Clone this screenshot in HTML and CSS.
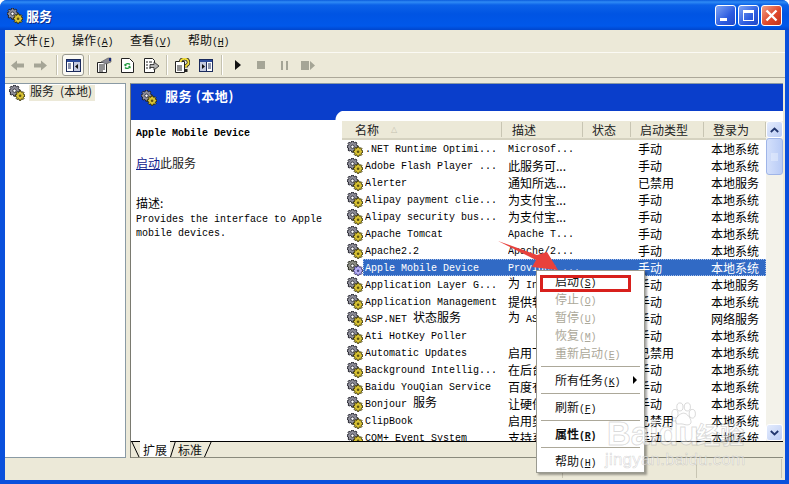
FILE: index.html
```html
<!DOCTYPE html>
<html lang="zh">
<head>
<meta charset="utf-8">
<title>服务</title>
<link rel="stylesheet" href="styles.css">
</head>
<body>
<svg class="defs" width="0" height="0">
  <defs>
    <symbol id="gears" viewBox="0 0 16 16">
      <path d="M4.700 0h1.600l.3 1.300 1.200.5 1.100-.7 1.100 1.100-.7 1.100.5 1.200 1.300.3v1.600l-1.300.3-.5 1.200.7 1.100-1.100 1.100-1.100-.7-1.200.5-.3 1.300H4.700l-.3-1.300-1.200-.5-1.100.7L1 9.100l.7-1.100-.5-1.200L0 6.500V4.900l1.300-.3.500-1.200L1 2.300l1.100-1.100 1.100.7 1.200-.5z" fill="#8e8e9a" stroke="#1c1c26" stroke-width=".9"/>
      <circle cx="5.500" cy="5.700" r="1.700" fill="#fff" stroke="#1c1c26" stroke-width=".8"/>
      <path d="M10.400 5.800h1.400l.3 1.100 1 .4 1-.6.9 1-.6.9.4 1 1.100.3v1.400l-1.100.3-.4 1 .6 1-.9.9-1-.6-1 .4-.3 1.100h-1.400l-.3-1.100-1-.4-1 .6-.9-.9.6-1-.4-1-1.100-.3v-1.400l1.100-.3.4-1-.6-.9.9-1 1 .6 1-.4z" fill="#d8c234" stroke="#262200" stroke-width=".9"/>
      <circle cx="11.100" cy="10.800" r="1.300" fill="#5e5410"/>
    </symbol>
  </defs>
</svg>
<div class="window">
  <header class="titlebar">
    <svg class="ico16"><use href="#gears"/></svg>
    <span class="title">服务</span>
    <div class="winbtns">
      <span class="wb wb-min"><svg width="21" height="21" viewBox="0 0 21 21"><rect x="5" y="13" width="7" height="3" fill="#fff"/></svg></span>
      <span class="wb wb-max"><svg width="21" height="21" viewBox="0 0 21 21"><path d="M5 5h11v11H5zM6 8v7h9V8z" fill="#fff" fill-rule="evenodd"/></svg></span>
      <span class="wb wb-close"><svg width="21" height="21" viewBox="0 0 21 21"><path d="M5.500 5.500l10 10M15.500 5.500l-10 10" stroke="#fff" stroke-width="2.400"/></svg></span>
    </div>
  </header>

  <nav class="menubar">
    <span class="menu"><span class="cn">文件</span>(<u>F</u>)</span>
    <span class="menu"><span class="cn">操作</span>(<u>A</u>)</span>
    <span class="menu"><span class="cn">查看</span>(<u>V</u>)</span>
    <span class="menu"><span class="cn">帮助</span>(<u>H</u>)</span>
  </nav>

  <div class="toolbar">
    <span class="tool t-back"><svg width="13" height="11" viewBox="0 0 13 11"><path d="M0 5.500L6 .5v3h7v4H6v3z" fill="#a5a596"/></svg></span>
    <span class="tool t-fwd"><svg width="13" height="11" viewBox="0 0 13 11"><path d="M13 5.500L7 .5v3H0v4h7v3z" fill="#a5a596"/></svg></span>
    <span class="tsep s1"></span>
    <span class="tool t-tree"><svg width="15" height="13" viewBox="0 0 15 13"><rect x=".5" y=".5" width="14" height="12" fill="#fff" stroke="#1a2a5c"/><rect x="1" y="1" width="13" height="2" fill="#2a4a9c"/><rect x="7" y="3" width="7" height="9" fill="#c5cbe0"/><path d="M7.500 3v9" stroke="#1a2a5c"/><path d="M2 5h3M2 7h3M2 9h3" stroke="#1a2a5c"/><path d="M12 5v5L9 7.500z" fill="#111"/></svg></span>
    <span class="tsep s2"></span>
    <span class="tool t-prop"><svg width="16" height="16" viewBox="0 0 16 16"><path d="M1.500 5.500h9l0 10h-9z" fill="#fff" stroke="#222"/><path d="M3 8h6M3 10h6M3 12h6M3 14h4" stroke="#222"/><path d="M5 5l7-4h3v4l-5 2z" fill="#8a8a92" stroke="#555" stroke-width=".6"/><rect x="13" y="1" width="2" height="3" fill="#1a2a7c"/></svg></span>
    <span class="tool t-ref"><svg width="13" height="15" viewBox="0 0 13 15"><path d="M.5.500h8l4 4v10H.5z" fill="#fff" stroke="#222"/><path d="M9 6.500a3 3 0 0 0-5 1M4 9.500a3 3 0 0 0 5-1" fill="none" stroke="#1c9a3c" stroke-width="1.300"/><path d="M3 6l1 2.500 2-1zM10 10.500l-1-3-2 1z" fill="#1c9a3c"/></svg></span>
    <span class="tool t-exp"><svg width="15" height="15" viewBox="0 0 15 15"><path d="M.5.500h8l2 2v12H.5z" fill="#fff" stroke="#222"/><path d="M2 4h2M5 4h3M2 7h2M2 10h2M5 10h2" stroke="#222"/><path d="M6 6.500h4v-2.500l5 4-5 4V9.500H6z" fill="#b5b5b5" stroke="#222" stroke-width=".8"/></svg></span>
    <span class="tsep s3"></span>
    <span class="tool t-help"><svg width="15" height="15" viewBox="0 0 15 15"><path d="M.5 3.500h9v11h-9z" fill="#fff" stroke="#222"/><path d="M2 8h5M2 10h5M2 12h5" stroke="#222"/><path d="M5.500 4a4 3.500 0 1 1 5.500 3.500v2" fill="none" stroke="#222" stroke-width="3.400"/><path d="M5.500 4a4 3.500 0 1 1 5.500 3.500v2" fill="none" stroke="#f0dc3a" stroke-width="1.800"/><rect x="9.500" y="11" width="3" height="3" fill="#222"/></svg></span>
    <span class="tool t-pane"><svg width="14" height="13" viewBox="0 0 14 13"><rect x=".5" y=".5" width="13" height="12" fill="#fff" stroke="#1a2a5c"/><rect x="1" y="1" width="12" height="2" fill="#2a4a9c"/><rect x="1" y="3" width="6" height="9" fill="#c5cbe0"/><path d="M7.500 3v9" stroke="#1a2a5c"/><path d="M9 5h3M9 7h3M9 9h3" stroke="#1a2a5c"/><path d="M3 5v5l3-2.500z" fill="#111"/></svg></span>
    <span class="tsep s4"></span>
    <span class="tool t-play"><svg width="6" height="10" viewBox="0 0 6 10"><path d="M0 0l6 5-6 5z" fill="#111"/></svg></span>
    <span class="tool t-stop"><svg width="8" height="8" viewBox="0 0 8 8"><rect width="8" height="8" fill="#a5a596"/></svg></span>
    <span class="tool t-pause"><svg width="7" height="9" viewBox="0 0 7 9"><path d="M0 0h2v9H0zM5 0h2v9H5z" fill="#a5a596"/></svg></span>
    <span class="tool t-step"><svg width="14" height="9" viewBox="0 0 14 9"><path d="M0 0h8v9H0zM9 0l5 4.500L9 9z" fill="#a5a596"/></svg></span>
  </div>

  <main class="content">
    <aside class="treepane">
      <div class="treeitem">
        <svg class="ico16"><use href="#gears"/></svg>
        <span class="treelabel"><span class="cn">服务</span> <span class="cn">(本地)</span></span>
      </div>
    </aside>

    <section class="mainpane">
      <div class="bluehead">
        <svg class="ico16"><use href="#gears"/></svg>
        <span class="bluetitle">服务 (本地)</span>
      </div>
      <div class="body">
        <div class="detail">
          <h1 class="svcname">Apple Mobile Device</h1>
          <p class="action"><a class="startlink" href="#">启动</a>此服务</p>
          <p class="desc"><span class="cn">描述:</span><br>Provides the interface to Apple<br>mobile devices.</p>
        </div>
        <div class="listwrap">
          <div class="list">
            <div class="listhead">
              <span class="col c-name"><span class="cn">名称</span><i class="sort">△</i></span>
              <span class="col c-desc cn">描述</span>
              <span class="col c-stat cn">状态</span>
              <span class="col c-type cn">启动类型</span>
              <span class="col c-log cn">登录为</span>
            </div>
            <div class="rows">
              <div class="row"><svg class="ico16"><use href="#gears"/></svg><div class="cells"><span>.NET Runtime Optimi...</span><span>Microsof...</span><span class="cn">手动</span><span class="cn">本地系统</span></div></div>
              <div class="row"><svg class="ico16"><use href="#gears"/></svg><div class="cells"><span>Adobe Flash Player ...</span><span class="cn">此服务可...</span><span class="cn">手动</span><span class="cn">本地系统</span></div></div>
              <div class="row"><svg class="ico16"><use href="#gears"/></svg><div class="cells"><span>Alerter</span><span class="cn">通知所选...</span><span class="cn">已禁用</span><span class="cn">本地服务</span></div></div>
              <div class="row"><svg class="ico16"><use href="#gears"/></svg><div class="cells"><span>Alipay payment clie...</span><span class="cn">为支付宝...</span><span class="cn">手动</span><span class="cn">本地系统</span></div></div>
              <div class="row"><svg class="ico16"><use href="#gears"/></svg><div class="cells"><span>Alipay security bus...</span><span class="cn">为支付宝...</span><span class="cn">手动</span><span class="cn">本地系统</span></div></div>
              <div class="row"><svg class="ico16"><use href="#gears"/></svg><div class="cells"><span>Apache Tomcat</span><span>Apache T...</span><span class="cn">手动</span><span class="cn">本地系统</span></div></div>
              <div class="row"><svg class="ico16"><use href="#gears"/></svg><div class="cells"><span>Apache2.2</span><span>Apache/2...</span><span class="cn">手动</span><span class="cn">本地系统</span></div></div>
              <div class="row selected"><svg class="ico16 dim"><use href="#gears"/></svg><div class="cells"><span>Apple Mobile Device</span><span>Provides ...</span><span class="cn">手动</span><span class="cn">本地系统</span></div></div>
              <div class="row"><svg class="ico16"><use href="#gears"/></svg><div class="cells"><span>Application Layer G...</span><span><span class="cn">为</span> Inter...</span><span class="cn">手动</span><span class="cn">本地服务</span></div></div>
              <div class="row"><svg class="ico16"><use href="#gears"/></svg><div class="cells"><span>Application Management</span><span class="cn">提供软件...</span><span class="cn">手动</span><span class="cn">本地系统</span></div></div>
              <div class="row"><svg class="ico16"><use href="#gears"/></svg><div class="cells"><span>ASP.NET <span class="cn">状态服务</span></span><span><span class="cn">为</span> ASP.NET...</span><span class="cn">手动</span><span class="cn">网络服务</span></div></div>
              <div class="row"><svg class="ico16"><use href="#gears"/></svg><div class="cells"><span>Ati HotKey Poller</span><span></span><span class="cn">手动</span><span class="cn">本地系统</span></div></div>
              <div class="row"><svg class="ico16"><use href="#gears"/></svg><div class="cells"><span>Automatic Updates</span><span class="cn">启用下载...</span><span class="cn">已禁用</span><span class="cn">本地系统</span></div></div>
              <div class="row"><svg class="ico16"><use href="#gears"/></svg><div class="cells"><span>Background Intellig...</span><span class="cn">在后台传...</span><span class="cn">手动</span><span class="cn">本地系统</span></div></div>
              <div class="row"><svg class="ico16"><use href="#gears"/></svg><div class="cells"><span>Baidu YouQian Service</span><span class="cn">百度有钱...</span><span class="cn">手动</span><span class="cn">本地系统</span></div></div>
              <div class="row"><svg class="ico16"><use href="#gears"/></svg><div class="cells"><span>Bonjour <span class="cn">服务</span></span><span class="cn">让硬件设...</span><span class="cn">手动</span><span class="cn">本地系统</span></div></div>
              <div class="row"><svg class="ico16"><use href="#gears"/></svg><div class="cells"><span>ClipBook</span><span class="cn">启用剪贴...</span><span class="cn">已禁用</span><span class="cn">本地系统</span></div></div>
              <div class="row"><svg class="ico16"><use href="#gears"/></svg><div class="cells"><span>COM+ Event System</span><span class="cn">支持系统...</span><span class="cn">手动</span><span class="cn">本地系统</span></div></div>
            </div>
          </div>
          <div class="scrollbar">
            <span class="sbtn"><svg width="9" height="6" viewBox="0 0 9 6"><path d="M.8 5L4.500 1.500 8.200 5" fill="none" stroke="#22366e" stroke-width="1.800"/></svg></span>
            <span class="thumb"><svg width="7" height="8" viewBox="0 0 7 8"><path d="M0 1h7M0 3h7M0 5h7M0 7h7" stroke="#e8effd"/></svg></span>
            <span class="track"></span>
            <span class="sbtn"><svg width="9" height="6" viewBox="0 0 9 6"><path d="M.8 1L4.500 4.500 8.200 1" fill="none" stroke="#22366e" stroke-width="1.800"/></svg></span>
          </div>
        </div>
      </div>
      <div class="tabs">
        <svg class="slash" width="9" height="17" viewBox="0 0 9 17"><path d="M.5 0l7.500 16" stroke="#000"/></svg>
        <span class="tab active">扩展</span>
        <svg class="slash" width="6" height="17" viewBox="0 0 6 17"><path d="M5.500 0L.5 16" stroke="#000"/></svg>
        <span class="tab">标准</span>
        <svg class="slash" width="8" height="17" viewBox="0 0 8 17"><path d="M7.500 0L.5 16" stroke="#000"/></svg>
      </div>
    </section>
  </main>

  <footer class="statusbar">
    <span class="st st1"></span><span class="st st2"></span><span class="st st3"></span>
  </footer>
</div>

<ul class="ctxmenu">
  <li class="mi"><span class="cn">启动</span>(<u>S</u>)</li>
  <li class="mi off"><span class="cn">停止</span>(<u>O</u>)</li>
  <li class="mi off"><span class="cn">暂停</span>(<u>U</u>)</li>
  <li class="mi off"><span class="cn">恢复</span>(<u>M</u>)</li>
  <li class="mi off"><span class="cn">重新启动</span>(<u>E</u>)</li>
  <li class="msep"></li>
  <li class="mi sub"><span class="cn">所有任务</span>(<u>K</u>)<i class="caret"></i></li>
  <li class="msep"></li>
  <li class="mi"><span class="cn">刷新</span>(<u>F</u>)</li>
  <li class="msep"></li>
  <li class="mi strong"><span class="cn">属性</span>(<u>R</u>)</li>
  <li class="msep"></li>
  <li class="mi"><span class="cn">帮助</span>(<u>H</u>)</li>
</ul>
<div class="redbox"></div>
<svg class="arrow" width="62" height="32" viewBox="0 0 62 32"><path d="M0 2L39 16 49 13 60 31 34 28 38 21z" fill="#e8413c"/></svg>

<div class="watermark">
  <svg class="paw" width="26" height="32" viewBox="0 0 42 40"><g fill="#fff" fill-opacity=".55" stroke="#9a9a9a" stroke-opacity=".4" stroke-width="1.500"><ellipse cx="8" cy="18" rx="5" ry="7"/><ellipse cx="16" cy="7" rx="5" ry="6.500"/><ellipse cx="28" cy="7" rx="5" ry="6.500"/><ellipse cx="36" cy="18" rx="5" ry="7"/><path d="M22 17c6 0 12 9 12 14s-6 6-12 4-12 2-13-4 7-14 13-14z"/></g></svg>
  <span class="wm-bai">Bai<span class="wm-du">du</span></span>
  <span class="wm-jy">经验</span>
  <span class="wm-url">jingyan.baidu.com</span>
</div>
</body>
</html>
```

FILE: styles.css
```css
* { box-sizing: border-box; }
html, body { margin: 0; padding: 0; width: 789px; height: 484px; overflow: hidden; background: #fff; }
body { position: relative; font-family: "Liberation Mono", "Noto Sans CJK SC", monospace; font-size: 10px; color: #000; }
.defs { position: absolute; }
.cn { font-family: "Noto Sans CJK SC", "Liberation Sans", sans-serif; font-size: 12px; line-height: 1; letter-spacing: 0; }
u { text-decoration: underline; }
.ico16 { width: 16px; height: 16px; flex: none; display: block; }

.window { width: 789px; height: 484px; display: flex; flex-direction: column; background: #0a50dc; padding: 0 4px 4px 5px; border-radius: 7px 7px 0 0; }

.titlebar { flex: none; height: 30px; margin: 0 -4px 0 -5px; padding: 1px 7px 0 7px; display: flex; align-items: center; gap: 3px; background: linear-gradient(#0a5cdc 0, #2f8bf5 2px, #0b62e8 5px, #0054e3 14px, #0058ea 26px, #0046cc 30px); border-radius: 7px 7px 0 0; }
.title { font-family: "Noto Sans CJK SC", sans-serif; font-size: 13px; font-weight: 700; color: #fff; text-shadow: 1px 1px 0 #0a2a8c; }
.winbtns { margin-left: auto; display: flex; gap: 2px; }
.wb { width: 21px; height: 21px; border: 1px solid #fff; border-radius: 3px; display: block; overflow: hidden; }
.wb svg { display: block; margin: -1px; }
.wb-min, .wb-max { background: linear-gradient(135deg, #7fa4f4, #2c5ce0 60%, #2148c8); }
.wb-close { background: linear-gradient(135deg, #f0a088, #e0492c 55%, #c0331c); }

.menubar { flex: none; height: 23px; display: flex; background: #ece9d8; border-bottom: 1px solid #fbfaf4; padding: 0 0 0 9px; align-items: center; font-size: 10px; letter-spacing: -.3px; }
.menu { width: 58px; white-space: nowrap; color: #111; }

.toolbar { flex: none; height: 25px; display: flex; align-items: center; background: #ece9d8; border-bottom: 1px solid #aca899; }
.tool { display: flex; align-items: center; justify-content: center; flex: none; }
.t-back { margin-left: 6px; }
.t-fwd { margin-left: 10px; }
.tsep { flex: none; width: 1px; height: 20px; background: #c5c2b0; box-shadow: 1px 0 0 #fff; }
.s1 { margin-left: 9px; }
.t-tree { width: 22px; height: 22px; margin-left: 5px; background: #fbfaf5; border: 1px solid #9a9a90; border-radius: 3px; }
.s2 { margin-left: 4px; }
.t-prop { margin-left: 7px; }
.t-ref { margin-left: 9px; }
.t-exp { margin-left: 10px; }
.s3 { margin-left: 7px; }
.t-help { margin-left: 8px; }
.t-pane { margin-left: 9px; }
.s4 { margin-left: 8px; }
.t-play { margin-left: 13px; }
.t-stop { margin-left: 16px; }
.t-pause { margin-left: 16px; }
.t-step { margin-left: 13px; }

.content { flex: 1; min-height: 0; display: flex; gap: 4px; background: #ece9d8; padding: 5px 2px 0 0; }
.treepane { flex: none; width: 121px; background: #fff; border: 1px solid #8a9aa4; border-width: 1px 1px 1px 0; }
.treeitem { display: flex; align-items: center; gap: 4px; padding: 0 0 0 4px; height: 17px; }
.treelabel { background: #ece9d8; padding: 0 3px 0 1px; height: 16px; line-height: 15px; white-space: nowrap; color: #222; }

.mainpane { flex: 1; min-width: 0; display: flex; flex-direction: column; background: #fff; border-left: 1px solid #7a7a70; border-top: 1px solid #8a9aa4; position: relative; }
.bluehead { flex: none; height: 27px; background: #0a3ecb; display: flex; align-items: flex-start; gap: 8px; padding: 6px 0 0 10px; }
.bluetitle { margin-top: -1px; font-family: "Noto Sans CJK SC", sans-serif; font-size: 13px; font-weight: 700; line-height: 13px; letter-spacing: .6px; color: #fff; }

.body { flex: 1; min-height: 0; display: flex; }
.detail { flex: none; width: 202px; border-top: 9px solid #0a3ecb; padding: 7px 0 0 5px; }
.svcname { margin: 0; font-size: 10px; line-height: 13px; font-weight: 700; font-family: "Liberation Mono", monospace; }
.action { margin: 14px 0 0; font-family: "Noto Sans CJK SC", sans-serif; font-size: 12px; line-height: 17px; color: #222; }
.startlink { color: #10208c; text-decoration: underline; }
.desc { margin: 26px 0 0; line-height: 14px; }

.listwrap { flex: 1; min-width: 0; display: flex; padding: 10px 0 0 9px; position: relative; }
.listwrap::before { content: ""; position: absolute; left: 0; top: 0; width: 12px; height: 9px; background: radial-gradient(circle at 100% 100%, #fff 9px, #0a3ecb 10px); }
.list { flex: 1; min-width: 0; overflow: hidden; display: flex; flex-direction: column; }
.listhead { flex: none; height: 19px; display: grid; grid-template-columns: 160px 81px 48px 73px 1fr; background: #ece9d8; border-bottom: 2px solid #d5d2c0; align-items: center; }
.col { height: 15px; padding-left: 10px; border-right: 1px solid #c8c5b3; line-height: 15px; color: #222; display: flex; align-items: center; white-space: nowrap; }
.c-name { padding-left: 13px; }
.c-stat, .c-type, .c-log { padding-left: 9px; }
.sort { font-style: normal; color: #c5c2b0; font-size: 8px; margin-left: 12px; font-family: "DejaVu Sans", sans-serif; }
.rows { flex: 1; min-height: 0; overflow: hidden; }
.row { height: 17px; display: flex; align-items: center; padding-left: 5px; color: #000; }
.cells { flex: 1; height: 17px; display: grid; grid-template-columns: 143px 130px 73px 1fr; align-items: center; padding-left: 2px; white-space: nowrap; line-height: 17px; }
.cells > span { overflow: hidden; height: 17px; line-height: 17px; }
.cells > span:not(.cn) { padding-top: 1px; }
.selected .cells { background: #316ac5; color: #fff; outline: 1px dotted #a8c0e8; outline-offset: -1px; }
.dim { filter: hue-rotate(190deg) saturate(.8); }

.scrollbar { flex: none; width: 17px; display: flex; flex-direction: column; background: #f3f2ea; }
.sbtn { flex: none; height: 17px; display: flex; align-items: center; justify-content: center; background: linear-gradient(135deg, #e4ecfd, #bccdf5); border: 1px solid #fff; border-radius: 3px; }
.thumb { flex: none; height: 37px; display: flex; align-items: center; justify-content: center; background: linear-gradient(90deg, #d4e0fb, #b8cbf6); border: 1px solid #9fb5e8; border-radius: 3px; }
.track { flex: 1; }

.tabs { flex: none; height: 17px; display: flex; background: #ece9d8; border-top: 1px solid #000; border-bottom: 1px solid #8a8a7c; }
.slash { flex: none; display: block; margin-top: -1px; }
.tab { flex: none; width: 30px; height: 16px; margin-top: -1px; text-align: center; font-family: "Noto Sans CJK SC", sans-serif; font-size: 12px; line-height: 17px; color: #111; }
.tab + .slash + .tab { width: 28px; }
.tab.active { background: #fff; }

.statusbar { flex: none; height: 22px; display: flex; background: #ece9d8; padding-top: 1px; }
.st { height: 19px; border-right: 1px solid #c8c5b3; }
.st1 { width: 558px; }
.st2 { width: 134px; }
.st3 { width: 85px; }

.ctxmenu { position: absolute; left: 536px; top: 270px; width: 109px; height: 203px; margin: 0; padding: 1px 3px 0; list-style: none; background: #fff; border: 1px solid #9a9a90; box-shadow: 2px 2px 2px rgba(0,0,0,.35); font-size: 10px; letter-spacing: -.3px; color: #111; }
.mi { height: 18px; line-height: 18px; padding: 3px 0 0 15px; white-space: nowrap; position: relative; }
.off { color: #aca899; }
.strong { font-weight: 700; }
.strong .cn { font-weight: 700; }
.msep { height: 1px; background: #aca899; margin: 4px 1px; }
.caret { position: absolute; right: 4px; top: 5px; width: 0; height: 0; border-left: 4px solid #000; border-top: 4px solid transparent; border-bottom: 4px solid transparent; }
.redbox { position: absolute; left: 540px; top: 275px; width: 91px; height: 17px; border: 3px solid #d8201c; }
.arrow { position: absolute; left: 498px; top: 239px; }

.watermark { position: absolute; left: 600px; top: 390px; width: 189px; height: 94px; pointer-events: none; }
.paw { position: absolute; left: 70px; top: 9px; }
.wm-bai { position: absolute; left: 7px; top: 27px; font: 700 33px/33px "Liberation Sans", sans-serif; color: rgba(255,255,255,.6); -webkit-text-stroke: 1px rgba(130,130,130,.28); }
.wm-du { color: rgba(255,255,255,.55); }
.wm-jy { position: absolute; left: 96px; top: 29px; font: 700 24px/30px "Noto Sans CJK SC", sans-serif; color: rgba(255,255,255,.55); -webkit-text-stroke: 1px rgba(130,130,130,.28); }
.wm-url { position: absolute; left: 5px; top: 60px; font: 400 17px/20px "Liberation Sans", sans-serif; letter-spacing: .2px; color: rgba(255,255,255,.6); -webkit-text-stroke: .6px rgba(120,120,120,.3); }
```
